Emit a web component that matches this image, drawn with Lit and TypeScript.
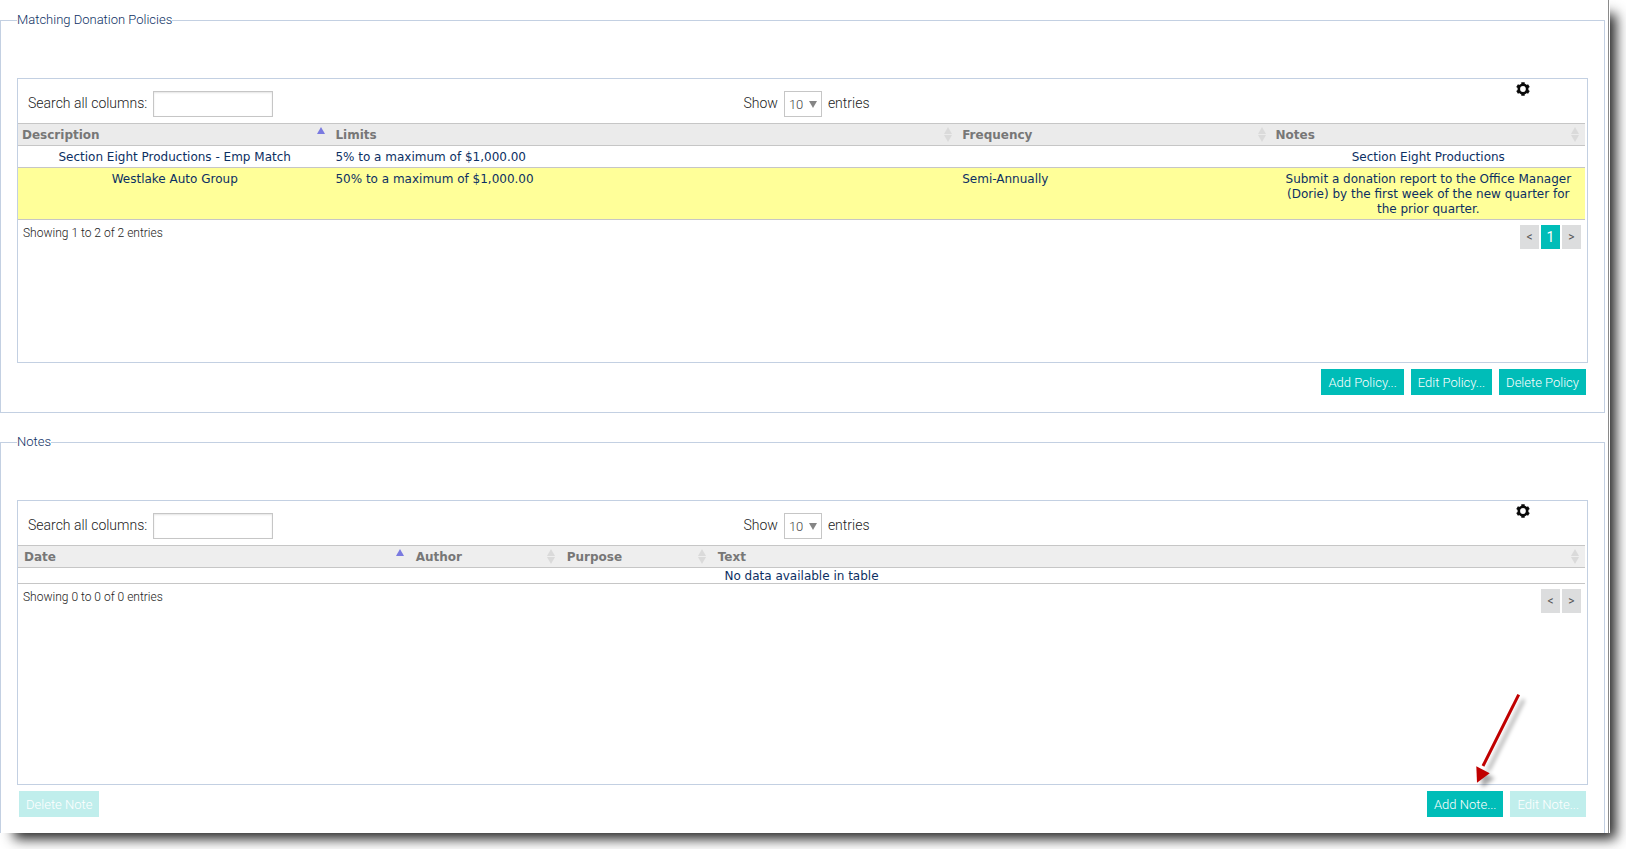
import { LitElement, html, css, svg, nothing } from "lit";
import { customElement, property } from "lit/decorators.js";

interface Column {
  label: string;
  width?: string;
  centered?: boolean;
}

const upTriangle = (y: number) => svg`<path d="M0 ${y + 7}L4 ${y}L8 ${y + 7}Z" />`;
const downTriangle = (y: number) => svg`<path d="M0 ${y}L4 ${y + 7}L8 ${y}Z" />`;

@customElement("data-panel")
export class DataPanel extends LitElement {
  @property({ attribute: false }) columns: Column[] = [];
  @property({ attribute: false }) rows: string[][] = [];
  @property({ type: Number }) selected = -1;
  @property({ type: Boolean, reflect: true }) roomy = false;

  static styles = css`
    :host {
      display: block;
      box-sizing: border-box;
      min-height: 285px;
      padding-right: 2px;
      border: 1px solid #c3d0e2;
      --head: #ebebeb;
      --inset: 4px;
    }
    :host([roomy]) {
      --head: #eeeeee;
      --inset: 6px;
    }
    .toolbar {
      display: grid;
      grid-template-columns: 1fr auto 1fr;
      align-items: start;
      height: 44px;
      padding-left: 10px;
      font-size: 14px;
      color: #222;
      box-sizing: border-box;
    }
    .field {
      display: flex;
      align-items: center;
      gap: 6px;
      padding-top: 12px;
      line-height: 24px;
    }
    .field label,
    .field span {
      padding-bottom: 2px;
    }
    .search,
    .length {
      box-sizing: border-box;
      height: 26px;
      border: 1px solid #c6c6c6;
      border-radius: 0;
      background: #fff;
      font: 300 13px Roboto, sans-serif;
      color: #444;
    }
    .search {
      width: 120px;
      padding: 0 4px;
      box-shadow: inset 0 1px 2px #e4e4e4;
    }
    .pick {
      display: grid;
      align-items: center;
    }
    .pick > * {
      grid-area: 1 / 1;
    }
    .pick svg {
      justify-self: end;
      margin-right: 5px;
      fill: #858585;
      pointer-events: none;
    }
    .length {
      appearance: none;
      width: 38px;
      padding: 0 0 0 4px;
    }
    .gear {
      justify-self: end;
      display: block;
      margin: 3px 55px 0 0;
      padding: 0;
      border: 0;
      background: none;
      line-height: 0;
    }
    table {
      width: 100%;
      table-layout: fixed;
      border-collapse: separate;
      border-spacing: 0;
      font: 12px / 15px "DejaVu Sans", sans-serif;
      color: #0c2f63;
    }
    th {
      height: 21px;
      padding: 0;
      border: solid #c6c6c6;
      border-width: 1px 0;
      background: var(--head);
    }
    .sort {
      display: flex;
      width: 100%;
      height: 21px;
      align-items: center;
      justify-content: space-between;
      padding: 0 6px 0 var(--inset);
      border: 0;
      background: none;
      font: bold 12px / 15px "DejaVu Sans", sans-serif;
      color: #777;
    }
    .sort span {
      padding-top: 2px;
    }
    .sort svg {
      fill: #dadada;
    }
    .sort .asc {
      fill: #7a7ae0;
    }
    td {
      padding: 4px 4px 2px;
      border-bottom: 1px solid #c6c6c6;
      vertical-align: top;
    }
    .centered {
      text-align: center;
    }
    .chosen {
      background: #ffff99;
    }
    .empty {
      padding: 1px 0 0;
      line-height: 14px;
      text-align: center;
    }
    .foot {
      display: flex;
      justify-content: space-between;
      align-items: flex-start;
      padding: 5px 4px 0 5px;
      font-size: 12px;
      line-height: 16px;
      color: #222;
    }
    .pages {
      display: flex;
      gap: 2px;
    }
    .page {
      min-width: 19px;
      height: 24px;
      padding: 0 5px;
      border: 0;
      background: #dcddde;
      font: 12px Roboto, sans-serif;
      color: #555;
    }
    .current {
      background: #00bdb8;
      font-size: 14px;
      color: #fff;
    }
  `;

  render() {
    return html`
      <div class="toolbar">
        <div class="field">
          <label for="search">Search all columns:</label>
          <input id="search" class="search" type="text" />
        </div>
        <div class="field">
          <label for="length">Show</label>
          <div class="pick">
            <select id="length" class="length">
              <option>10</option>
              <option>25</option>
              <option>50</option>
            </select>
            <svg width="8" height="7" viewBox="0 0 8 7">${downTriangle(0)}</svg>
          </div>
          <span>entries</span>
        </div>
        <button class="gear" aria-label="Table settings">
          <svg width="14" height="14" viewBox="0 0 14 14">
            <g fill="none" stroke="#0a0a0a">
              <circle cx="7" cy="7" r="4.2" stroke-width="2.6" />
              <path
                d="M7 0.2V2.4M7 11.6V13.8M1.1 3.6L3 4.7M11 9.3L12.9 10.4M1.1 10.4L3 9.3M11 4.7L12.9 3.6"
                stroke-width="3.4"
              />
            </g>
          </svg>
        </button>
      </div>
      <table>
        <colgroup>
          ${this.columns.map((c) => html`<col style=${c.width ? `width:${c.width}` : ""} />`)}
        </colgroup>
        <thead>
          <tr>
            ${this.columns.map(
              (c, i) => html`<th scope="col" aria-sort=${i === 0 ? "ascending" : nothing}>
                <button class="sort">
                  <span>${c.label}</span>
                  <svg class=${i === 0 ? "asc" : "both"} width="8" height="15" viewBox="0 0 8 15">
                    ${upTriangle(0)}${i === 0 ? nothing : downTriangle(8)}
                  </svg>
                </button>
              </th>`
            )}
          </tr>
        </thead>
        <tbody>
          ${this.rows.length
            ? this.rows.map(
                (row, r) => html`<tr class=${r === this.selected ? "chosen" : ""}>
                  ${row.map(
                    (cell, i) => html`<td class=${this.columns[i].centered ? "centered" : ""}>${cell}</td>`
                  )}
                </tr>`
              )
            : html`<tr>
                <td class="empty" colspan=${this.columns.length}>No data available in table</td>
              </tr>`}
        </tbody>
      </table>
      <div class="foot">
        <span>Showing ${this.rows.length ? 1 : 0} to ${this.rows.length} of ${this.rows.length} entries</span>
        <div class="pages">
          <button class="page" aria-label="Previous page">&lt;</button>
          ${this.rows.length ? html`<button class="page current">1</button>` : nothing}
          <button class="page" aria-label="Next page">&gt;</button>
        </div>
      </div>
    `;
  }
}

@customElement("app-root")
export class AppRoot extends LitElement {
  static styles = css`
    :host {
      display: block;
      padding: 0 16px 16px 0;
      background: #fff;
      font-family: Roboto, sans-serif;
      font-weight: 300;
      overflow: hidden;
    }
    .sheet {
      padding-right: 1px;
      background: #fff;
      box-shadow: 10px 10px 12px -4px rgba(0, 0, 0, 0.85);
    }
    .page {
      display: flex;
      flex-direction: column;
      gap: 21px;
      padding: 12px 3px 0 0;
      border-right: 1px solid #8a8a8a;
    }
    .group {
      min-width: 0;
      margin: 0;
      padding: 50px 16px 17px;
      border: 1px solid #c3d0e2;
    }
    .last {
      padding-bottom: 16px;
      border-bottom: 0;
    }
    legend {
      padding: 0;
      font-size: 13px;
      line-height: 16px;
      color: #0c2f63;
    }
    .actions {
      display: flex;
      justify-content: flex-end;
      gap: 7px;
      padding: 6px 2px 0;
    }
    .first {
      margin-right: auto;
    }
    .action {
      height: 26px;
      padding: 0 7px;
      border: 0;
      background: #00bdb8;
      font: 300 13px Roboto, sans-serif;
      color: #fff;
      white-space: nowrap;
    }
    .action:disabled {
      background: #c0eeec;
    }
    .target {
      position: relative;
      display: flex;
    }
    .pointer {
      position: absolute;
      right: -26px;
      bottom: 100%;
      margin-bottom: -4px;
      pointer-events: none;
      filter: drop-shadow(5px 5px 2px rgba(0, 0, 0, 0.35));
    }
  `;

  private policyColumns: Column[] = [
    { label: "Description", width: "20%", centered: true },
    { label: "Limits", width: "40%" },
    { label: "Frequency", width: "20%" },
    { label: "Notes", width: "20%", centered: true },
  ];

  private policies = [
    ["Section Eight Productions - Emp Match", "5% to a maximum of $1,000.00", "", "Section Eight Productions"],
    [
      "Westlake Auto Group",
      "50% to a maximum of $1,000.00",
      "Semi-Annually",
      "Submit a donation report to the Office Manager (Dorie) by the first week of the new quarter for the prior quarter.",
    ],
  ];

  private noteColumns: Column[] = [
    { label: "Date", width: "25%" },
    { label: "Author", width: "151px" },
    { label: "Purpose", width: "151px" },
    { label: "Text" },
  ];

  render() {
    return html`
      <div class="sheet">
        <main class="page">
          <fieldset class="group">
            <legend>Matching Donation Policies</legend>
            <data-panel .columns=${this.policyColumns} .rows=${this.policies} selected="1"></data-panel>
            <div class="actions">
              <button class="action">Add Policy...</button>
              <button class="action">Edit Policy...</button>
              <button class="action">Delete Policy</button>
            </div>
          </fieldset>
          <fieldset class="group last">
            <legend>Notes</legend>
            <data-panel roomy .columns=${this.noteColumns}></data-panel>
            <div class="actions">
              <button class="action first" disabled>Delete Note</button>
              <div class="target">
                <button class="action">Add Note...</button>
                <svg class="pointer" width="60" height="105" viewBox="0 0 60 105">
                  <path d="M49.7 4.7L14 76" fill="none" stroke="#c00000" stroke-width="3" />
                  <path d="M7.3 76.3L20.7 83.3L8 92.7Z" fill="#c00000" />
                </svg>
              </div>
              <button class="action" disabled>Edit Note...</button>
            </div>
          </fieldset>
        </main>
      </div>
    `;
  }
}
